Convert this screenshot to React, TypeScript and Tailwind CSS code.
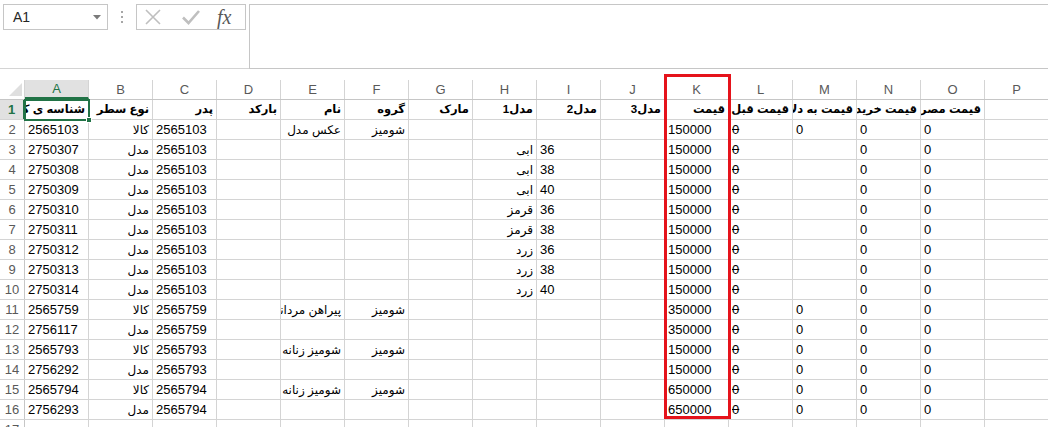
type Cell = { v: string; rtl?: boolean; strike?: boolean };
type Row = Partial<Record<string, Cell>>;

const COLS = ["A", "B", "C", "D", "E", "F", "G", "H", "I", "J", "K", "L", "M", "N", "O", "P"];

// number-like values sit on the left, persian text sits on the right
const n = (v: string): Cell => ({ v });
const t = (v: string): Cell => ({ v, rtl: true });
const z: Cell = { v: "0", strike: true };

const header: Row = {
  A: t("شناسه ی کالا"),
  B: t("نوع سطر"),
  C: t("پدر"),
  D: t("بارکد"),
  E: t("نام"),
  F: t("گروه"),
  G: t("مارک"),
  H: t("مدل1"),
  I: t("مدل2"),
  J: t("مدل3"),
  K: t("قیمت"),
  L: t("قیمت قبل"),
  M: t("قیمت به دلار"),
  N: t("قیمت خرید"),
  O: t("قیمت مصرف کننده"),
};

const variant = (id: string, parent: string, color: string, size: string, price: string): Row => ({
  A: n(id),
  B: t("مدل"),
  C: n(parent),
  H: t(color),
  I: n(size),
  K: n(price),
  L: z,
  N: n("0"),
  O: n("0"),
});

const product = (id: string, name: string, price: string): Row => ({
  A: n(id),
  B: t("کالا"),
  C: n(id),
  E: t(name),
  F: t("شومیز"),
  K: n(price),
  L: z,
  M: n("0"),
  N: n("0"),
  O: n("0"),
});

const model = (id: string, parent: string, price: string): Row => ({
  A: n(id),
  B: t("مدل"),
  C: n(parent),
  K: n(price),
  L: z,
  M: n("0"),
  N: n("0"),
  O: n("0"),
});

const rows: Row[] = [
  header,
  product("2565103", "عکس مدل", "150000"),
  variant("2750307", "2565103", "ابی", "36", "150000"),
  variant("2750308", "2565103", "ابی", "38", "150000"),
  variant("2750309", "2565103", "ابی", "40", "150000"),
  variant("2750310", "2565103", "قرمز", "36", "150000"),
  variant("2750311", "2565103", "قرمز", "38", "150000"),
  variant("2750312", "2565103", "زرد", "36", "150000"),
  variant("2750313", "2565103", "زرد", "38", "150000"),
  variant("2750314", "2565103", "زرد", "40", "150000"),
  product("2565759", "پیراهن مردانه", "350000"),
  model("2756117", "2565759", "350000"),
  product("2565793", "شومیز زنانه مجلسی", "150000"),
  model("2756292", "2565793", "150000"),
  product("2565794", "شومیز زنانه مجلسی", "650000"),
  model("2756293", "2565794", "650000"),
  {},
];

const FormulaBar = () => (
  <div className="flex h-[69px] items-start border-b border-[#d4d4d4]">
    {/* name box */}
    <div className="ml-[3px] mt-[4px] flex h-[26px] w-[105px] items-center justify-between border border-[#c6c6c6] pl-[9px] pr-[6px]">
      <span className="text-[14px] text-[#262626]">A1</span>
      <svg width="8" height="5" viewBox="0 0 8 5">
        <polygon points="0,0 8,0 4,4.5" fill="#7a7a7a" />
      </svg>
    </div>
    {/* grip dots */}
    <div className="ml-[13px] mt-[11px] flex flex-col gap-[3px]">
      <span className="h-[2px] w-[2px] bg-[#a6a6a6]" />
      <span className="h-[2px] w-[2px] bg-[#a6a6a6]" />
      <span className="h-[2px] w-[2px] bg-[#a6a6a6]" />
    </div>
    {/* cancel / enter / insert function */}
    <div className="ml-[13px] mt-[4px] flex h-[26px] w-[110px] items-center border border-[#c6c6c6]">
      <svg className="ml-[8px]" width="16" height="16" viewBox="0 0 16 16">
        <path d="M1 1 L15 15 M15 1 L1 15" stroke="#bfbfbf" strokeWidth="1.6" fill="none" />
      </svg>
      <svg className="ml-[21px]" width="18" height="16" viewBox="0 0 18 16">
        <path d="M1 8.5 L6.5 14 L17 2" stroke="#bfbfbf" strokeWidth="2.6" fill="none" />
      </svg>
      <span className="ml-[17px] font-['Liberation_Serif',serif] text-[20px] italic leading-none text-[#595959]">
        fx
      </span>
    </div>
    {/* formula input */}
    <div className="ml-[3px] mt-[4px] h-[65px] flex-1 border border-r-0 border-[#c6c6c6]" />
  </div>
);

const ColumnHeaders = () => (
  <div className="flex h-[20px] border-b border-[#c6c6c6] text-[13px] text-[#595959]">
    <div className="flex w-[25px] shrink-0 items-end justify-end border-r border-[#d4d4d4] pb-[3px] pr-[2px]">
      <svg width="13" height="13" viewBox="0 0 13 13">
        <polygon points="13,0 13,13 0,13" fill="#dfdfdf" />
      </svg>
    </div>
    {COLS.map((c) =>
      c === "A" ? (
        <div
          key={c}
          className="flex w-[64px] shrink-0 items-center justify-center border-r border-b-2 border-r-[#d4d4d4] border-b-[#217346] bg-[#e1e1e1] text-[#217346]"
        >
          {c}
        </div>
      ) : (
        <div key={c} className="flex w-[64px] shrink-0 items-center justify-center border-r border-[#d4d4d4]">
          {c}
        </div>
      )
    )}
  </div>
);

const SheetCell = ({ cell, bold }: { cell?: Cell; bold: boolean }) => {
  if (!cell) return <div className="h-full w-[64px] shrink-0 border-r border-[#d4d4d4]" />;
  const size = cell.rtl ? (bold ? "text-[11.5px]" : "text-[12px]") : "";
  return (
    <div
      dir={cell.rtl ? "rtl" : "ltr"}
      className={`flex h-full w-[64px] shrink-0 items-center overflow-hidden whitespace-nowrap border-r border-[#d4d4d4] px-[3px] ${
        cell.rtl ? "text-right" : "text-left"
      } ${size} ${bold ? "font-bold" : ""}`}
    >
      <span className={cell.strike ? "line-through" : ""}>{cell.v}</span>
    </div>
  );
};

export default function App() {
  return (
    <div className="relative h-[427px] w-[1048px] overflow-hidden bg-white font-['Liberation_Sans','DejaVu_Sans',sans-serif] text-[13px] text-black">
      <FormulaBar />
      <div className="h-[11px]" />
      <ColumnHeaders />
      {rows.map((row, i) => {
        const active = i === 0;
        return (
          <div key={i} className="flex h-[20px] border-b border-[#d4d4d4]">
            <div
              className={`flex w-[25px] shrink-0 items-center justify-center ${
                active
                  ? "border-r-2 border-[#217346] bg-[#e1e1e1] font-bold text-[#217346]"
                  : "border-r border-[#c6c6c6] text-[#595959]"
              }`}
            >
              {i + 1}
            </div>
            {COLS.map((c) => (
              <SheetCell key={c} cell={row[c]} bold={active} />
            ))}
          </div>
        );
      })}

      {/* active cell A1 */}
      <div className="pointer-events-none absolute left-[24px] top-[99px] h-[22px] w-[66px] border-2 border-[#217346]">
        <span className="absolute -bottom-[4px] -right-[4px] h-[6px] w-[6px] border border-white bg-[#217346]" />
      </div>

      {/* red highlight round the price column */}
      <div className="pointer-events-none absolute left-[664px] top-[74px] h-[345px] w-[67px] border-[3px] border-[#e5131b]" />
    </div>
  );
}
